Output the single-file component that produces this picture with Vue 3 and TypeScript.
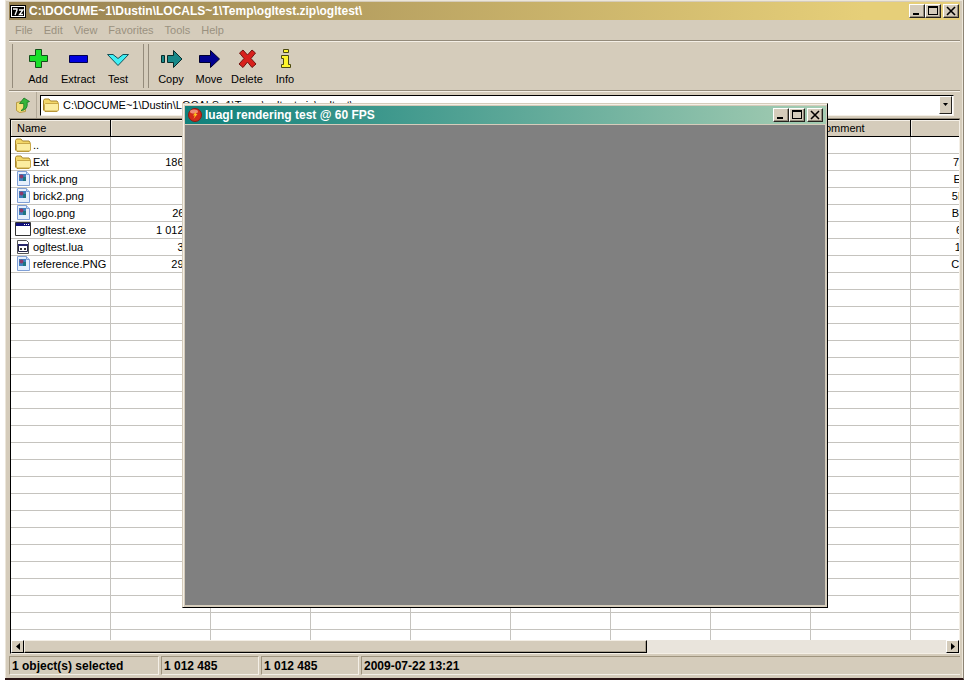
<script setup lang="ts">
import { ref } from 'vue'

interface Entry {
  name: string
  kind: 'folder' | 'image' | 'exe' | 'lua'
  size: string
  crc: string
}

const path = ref('C:\\DOCUME~1\\Dustin\\LOCALS~1\\Temp\\ogltest.zip\\ogltest\\')
const menus: string[] = ['File', 'Edit', 'View', 'Favorites', 'Tools', 'Help']
const archiveTools: string[] = ['Add', 'Extract', 'Test']
const fileTools: string[] = ['Copy', 'Move', 'Delete', 'Info']
const columns: string[] = ['Name', '', '', '', '', '', '', '', 'Comment', '']
const entries: Entry[] = [
  { name: '..', kind: 'folder', size: '', crc: '' },
  { name: 'Ext', kind: 'folder', size: '186 880', crc: '7A40C512' },
  { name: 'brick.png', kind: 'image', size: '860', crc: 'E13B7052' },
  { name: 'brick2.png', kind: 'image', size: '912', crc: '5BA0D421' },
  { name: 'logo.png', kind: 'image', size: '26 112', crc: 'B04D1A37' },
  { name: 'ogltest.exe', kind: 'exe', size: '1 012 485', crc: '60412957' },
  { name: 'ogltest.lua', kind: 'lua', size: '3 402', crc: '1904E273' },
  { name: 'reference.PNG', kind: 'image', size: '29 184', crc: 'C13D05B8' },
]
const fillerRows = 60
const status: string[] = ['1 object(s) selected', '1 012 485', '1 012 485', '2009-07-22 13:21']
const captions: string[] = ['Minimize', 'Maximize', 'Close']
</script>

<template>
  <div class="desktop">
    <main class="window">
      <header class="titlebar">
        <svg class="app-icon" viewBox="0 0 16 13" aria-hidden="true">
          <rect x="0.5" y="0.5" width="15" height="12" fill="#000" stroke="#000" />
          <rect x="1.5" y="1.5" width="13" height="10" fill="none" stroke="#fff" />
          <path d="M3 4h4v1l-2 5M9 5h4l-3.500 4.500H13" fill="none" stroke="#fff" stroke-width="1.300" />
        </svg>
        <h1 class="title">{{ path }}</h1>
        <div class="captions">
          <button v-for="c in captions" :key="c" class="caption" :class="c.toLowerCase()" type="button" :aria-label="c">
            <svg viewBox="0 0 14 12" aria-hidden="true">
              <path v-if="c === 'Minimize'" d="M3 8h6v2H3z" />
              <path v-else-if="c === 'Maximize'" d="M2 1h10v9H2zM3 3v6h8V3z" fill-rule="evenodd" />
              <path v-else d="M3 2l8 8M11 2l-8 8" fill="none" stroke="#000" stroke-width="1.600" />
            </svg>
          </button>
        </div>
      </header>

      <nav class="menubar">
        <button v-for="m in menus" :key="m" class="menu" type="button">{{ m }}</button>
      </nav>

      <div class="toolbar">
        <div class="group">
          <button v-for="t in archiveTools" :key="t" class="tool" type="button">
            <svg viewBox="0 0 24 24" aria-hidden="true">
              <path v-if="t === 'Add'" d="M9.500 2.500h6v6h6v6h-6v6h-6v-6h-6v-6h6z" fill="#19e02a" stroke="#12501a" />
              <path v-else-if="t === 'Extract'" d="M3.500 8.500h18v7h-18z" fill="#0000e0" stroke="#000050" />
              <path v-else d="M1.500 7.500h5.500l5 4 5-4h5.500L12 18.500z" fill="#3ff0f5" stroke="#145058" />
            </svg>
            <span>{{ t }}</span>
          </button>
        </div>
        <div class="group files">
          <button v-for="t in fileTools" :key="t" class="tool" type="button">
            <svg viewBox="0 0 24 24" aria-hidden="true">
              <g v-if="t === 'Copy'" fill="#178888" stroke="#062c2c">
                <path d="M2.500 8.500h3v7h-3z" />
                <path d="M8.500 8.500h6v-5l8.500 8.500-8.500 8.500v-5h-6z" />
              </g>
              <path v-else-if="t === 'Move'" d="M2.500 8.500h11v-5l9 8.500-9 8.500v-5h-11z" fill="#000090" stroke="#000030" />
              <path v-else-if="t === 'Delete'" d="M4.500 6l3.500-3 4.500 5 4.500-5 3.500 3-4.500 5.500 5 5.500-4 3.500-4.500-5.500-4.500 5.500-4-3.500 5-5.500z" fill="#d8201c" stroke="#701410" />
              <g v-else fill="#fff52a" stroke="#4a4810">
                <path d="M10.500 2.500h5v3h-5z" />
                <path d="M8.500 8.500h7v9h2v3h-9v-3h2v-6h-2z" />
              </g>
            </svg>
            <span>{{ t }}</span>
          </button>
        </div>
      </div>

      <div class="addressbar">
        <button class="up" type="button" aria-label="Up one level">
          <svg viewBox="0 0 16 16" aria-hidden="true">
            <path d="M1.500 5.500l5-1 4 2v8l-6 1-3-2z" fill="#f4df7a" stroke="#b69a45" />
            <path d="M6 13.500c3-1.500 3-4 2.500-7H4.500L9 1l5.500 3.500-2.500 1c1 4-1 8-6 8z" fill="#35b53a" stroke="#157321" stroke-width=".8" />
          </svg>
        </button>
        <div class="combo">
          <svg class="folder" viewBox="0 0 16 14" aria-hidden="true">
            <path d="M.5 12V2.500l1-1.500h4.500l1.500 2H14l1 1.500V12l-1 1.500H2z" fill="#f3d768" stroke="#a8862b" />
            <path d="M1.500 12V6.500l1-1H15.500V12l-1 1H2.500z" fill="#fceda0" stroke="#c9a848" />
          </svg>
          <input v-model="path" class="path" type="text" aria-label="Address" spellcheck="false" />
          <button class="drop" type="button" aria-label="Show locations">
            <svg viewBox="0 0 7 4" aria-hidden="true"><path d="M1 0h5L3.500 3z" /></svg>
          </button>
        </div>
      </div>

      <section class="list">
        <div class="viewport">
          <table>
            <thead>
              <tr>
                <th v-for="(c, i) in columns" :key="i" scope="col">{{ c }}</th>
              </tr>
            </thead>
            <tbody>
              <tr v-for="e in entries" :key="e.name">
                <td class="name">
                  <div class="file">
                    <svg viewBox="0 0 16 16" aria-hidden="true">
                      <g v-if="e.kind === 'folder'">
                        <path d="M.5 13V3.500l1-1.500h4.500l1.500 2H14l1 1.500V13l-1 1.500H2z" fill="#f3d768" stroke="#a8862b" />
                        <path d="M1.500 13V7.500l1-1H15.500V13l-1 1H2.500z" fill="#fceda0" stroke="#c9a848" />
                      </g>
                      <g v-else-if="e.kind === 'image'">
                        <path d="M2.500.5h9l3 3v11h-12z" fill="#e6effc" stroke="#7f9fd6" />
                        <path d="M11.500.5v3h3" fill="#c9dcf8" stroke="#7f9fd6" />
                        <path d="M4 3h7v7H4z" fill="#3f7fbe" />
                        <circle cx="6.500" cy="5.500" r="2" fill="#8c3a6a" />
                        <path d="M8 6h3v4H8z" fill="#1f7480" />
                      </g>
                      <g v-else-if="e.kind === 'exe'">
                        <path d="M.5.500h15v13H.5z" fill="#fff" stroke="#333" />
                        <path d="M1 1h14v3H1z" fill="#10107c" />
                        <path d="M9 2h1v1H9zM11 2h1v1h-1zM13 2h1v1h-1z" fill="#fff" />
                      </g>
                      <g v-else>
                        <path d="M2.500 1.500h9l2 2v11h-11z" fill="#fff" stroke="#555" />
                        <path d="M3.500 5.500h9v7h-9z" fill="#fff" stroke="#26264a" />
                        <path d="M3 5h10v2H3z" fill="#26266a" />
                        <path d="M5 9h2v2H5zM9 9h2v2H9z" fill="#333" />
                      </g>
                    </svg>
                    <span>{{ e.name }}</span>
                  </div>
                </td>
                <td class="num">{{ e.size }}</td>
                <td v-for="n in 7" :key="n"></td>
                <td class="num">{{ e.crc }}</td>
              </tr>
              <tr v-for="r in fillerRows" :key="r" aria-hidden="true">
                <td v-for="(c, i) in columns" :key="i"></td>
              </tr>
            </tbody>
          </table>
        </div>
        <div class="scrollbar">
          <button class="arrow" type="button" aria-label="Scroll left">
            <svg viewBox="0 0 4 7" aria-hidden="true"><path d="M4 0v7L0 3.500z" /></svg>
          </button>
          <div class="track"><div class="thumb"></div></div>
          <button class="arrow" type="button" aria-label="Scroll right">
            <svg viewBox="0 0 4 7" aria-hidden="true"><path d="M0 0v7l4-3.500z" /></svg>
          </button>
        </div>
      </section>

      <footer class="statusbar">
        <div v-for="(s, i) in status" :key="i" class="pane">{{ s }}</div>
      </footer>
    </main>

    <section class="render" role="dialog" aria-labelledby="render-title">
      <header class="titlebar teal">
        <svg class="orb" viewBox="0 0 14 14" aria-hidden="true">
          <circle cx="7" cy="7" r="6.500" fill="#d22a1c" stroke="#8d1a10" />
          <ellipse cx="6" cy="3.500" rx="4" ry="2" fill="#ee8b78" />
          <path d="M8.500 3L5 7.500h1.800L5.500 11l4-5H7.700z" fill="#ffc21c" />
        </svg>
        <h2 id="render-title" class="title">luagl rendering test @ 60 FPS</h2>
        <div class="captions">
          <button v-for="c in captions" :key="c" class="caption" :class="c.toLowerCase()" type="button" :aria-label="c">
            <svg viewBox="0 0 14 12" aria-hidden="true">
              <path v-if="c === 'Minimize'" d="M3 8h6v2H3z" />
              <path v-else-if="c === 'Maximize'" d="M2 1h10v9H2zM3 3v6h8V3z" fill-rule="evenodd" />
              <path v-else d="M3 2l8 8M11 2l-8 8" fill="none" stroke="#000" stroke-width="1.600" />
            </svg>
          </button>
        </div>
      </header>
      <div class="canvas"></div>
    </section>
  </div>
</template>

<style>
body {
  margin: 0;
}
</style>

<style scoped>
.desktop {
  position: relative;
  box-sizing: border-box;
  height: 100vh;
  padding: 0 2px 0 5px;
  overflow: hidden;
  background: #fff;
  color: #000;
  font: 11px/16px "Liberation Sans", Arial, sans-serif;
}
.desktop *,
.desktop *::before {
  box-sizing: border-box;
}
button {
  margin: 0;
  padding: 0;
  border: 0;
  border-radius: 0;
  background: none;
  color: inherit;
  font: inherit;
}
svg {
  display: block;
  flex: none;
}
.window {
  display: flex;
  flex-direction: column;
  height: 100%;
  padding: 1px 3px 3px 4px;
  border-right: 1px solid #8d8474;
  border-bottom: 2px solid #2a1414;
  background: #d5ccbb;
  box-shadow: inset 1px 1px #ece6da, inset -1px 0 #ece6da;
}
.titlebar {
  display: flex;
  flex: none;
  align-items: center;
  gap: 3px;
  height: 18px;
  margin-top: 1px;
  padding: 0 1px 0 1px;
  background: linear-gradient(90deg, #978151, #e6cf79 90%);
}
.app-icon {
  width: 16px;
  height: 13px;
}
.title {
  flex: 1;
  min-width: 0;
  margin: 0;
  overflow: hidden;
  color: #fff;
  font-size: 12px;
  font-weight: bold;
  line-height: 16px;
  white-space: nowrap;
}
.captions {
  display: flex;
}
.caption {
  width: 16px;
  height: 14px;
  border: 1px solid;
  border-color: #fff #262420 #262420 #fff;
  background: #d5ccbb;
  box-shadow: inset -1px -1px #948b7b;
}
.caption svg {
  width: 14px;
  height: 12px;
}
.caption.close {
  margin-left: 2px;
}
.menubar {
  display: flex;
  flex: none;
  gap: 11px;
  height: 21px;
  padding: 0 6px;
  border-bottom: 1px solid #948b7b;
}
.menu {
  height: 20px;
  color: #9a917f;
}
.toolbar {
  display: flex;
  flex: none;
  height: 50px;
  border-top: 1px solid #f4efe6;
  border-bottom: 1px solid #948b7b;
}
.group {
  display: flex;
  margin: 2px 0 2px 3px;
  padding-left: 5px;
  border-left: 1px solid #948b7b;
}
.group.files {
  margin-left: 10px;
  padding-left: 3px;
  box-shadow: -4px 0 #d5ccbb, -5px 0 #948b7b;
}
.tool {
  display: flex;
  flex-direction: column;
  align-items: center;
  width: 40px;
  padding-top: 3px;
}
.files .tool {
  width: 38px;
}
.tool svg {
  width: 24px;
  height: 24px;
}
.addressbar {
  display: flex;
  flex: none;
  align-items: center;
  height: 28px;
  padding-right: 6px;
  border-top: 1px solid #f4efe6;
  border-bottom: 1px solid #948b7b;
}
.up {
  display: flex;
  align-items: center;
  justify-content: center;
  width: 28px;
  height: 26px;
  margin-right: 3px;
  border-right: 1px solid #b3aa99;
}
.up svg {
  width: 16px;
  height: 16px;
}
.combo {
  display: flex;
  flex: 1;
  align-items: center;
  height: 21px;
  padding: 0 1px 0 2px;
  border: 1px solid;
  border-color: #000 #f4efe6 #f4efe6 #000;
  background: #fff;
}
.folder {
  width: 16px;
  height: 14px;
}
.path {
  flex: 1;
  min-width: 0;
  height: 18px;
  margin: 0;
  padding: 0 4px;
  border: 0;
  outline: 0;
  background: none;
  color: #000;
  font: inherit;
}
.drop {
  display: flex;
  align-items: center;
  justify-content: center;
  width: 13px;
  height: 18px;
  border: 1px solid;
  border-color: #fff #262420 #262420 #fff;
  background: #d5ccbb;
}
.drop svg {
  width: 7px;
  height: 4px;
}
.list {
  display: flex;
  flex: 1 1 0;
  flex-direction: column;
  min-height: 0;
  margin-left: 1px;
  border: 1px solid;
  border-color: #000 #f4efe6 #f4efe6 #000;
  background: #fff;
}
.viewport {
  flex: 1 1 0;
  min-height: 0;
  overflow: hidden;
}
table {
  width: 1000px;
  border-collapse: separate;
  border-spacing: 0;
  table-layout: fixed;
}
th {
  height: 17px;
  padding: 0 6px;
  border-right: 1px solid #000;
  border-bottom: 1px solid #000;
  background: #d5ccbb;
  box-shadow: inset 1px 1px #f4efe6;
  font-weight: normal;
  line-height: 16px;
  text-align: left;
}
td {
  height: 17px;
  padding: 0;
  border-right: 1px solid #c5c3be;
  border-bottom: 1px solid #c5c3be;
  line-height: 16px;
  white-space: nowrap;
}
td.num {
  padding-right: 5px;
  text-align: right;
}
.file {
  display: flex;
  gap: 2px;
  height: 16px;
  padding-left: 4px;
}
.file svg {
  width: 16px;
  height: 16px;
}
.scrollbar {
  display: flex;
  flex: none;
  height: 13px;
  background: #e9e4dc;
}
.arrow {
  display: flex;
  align-items: center;
  justify-content: center;
  width: 13px;
  border: 1px solid;
  border-color: #fff #000 #000 #fff;
  background: #d5ccbb;
}
.arrow svg {
  width: 4px;
  height: 7px;
}
.track {
  flex: 1;
}
.thumb {
  width: 67.6%;
  height: 100%;
  border: 1px solid;
  border-color: #f4efe6 #000 #000 #f4efe6;
  background: #d5ccbb;
  box-shadow: inset -1px -1px #a79e8d;
}
.statusbar {
  display: flex;
  flex: none;
  gap: 2px;
  height: 21px;
  padding-top: 2px;
  font-size: 12px;
  font-weight: bold;
}
.pane {
  width: 98px;
  padding: 0 2px;
  border: 1px solid;
  border-color: #a0957f #f4efe6 #f4efe6 #a0957f;
  line-height: 18px;
  white-space: nowrap;
}
.pane:first-child {
  width: 150px;
}
.pane:last-child {
  flex: 1;
  border-right: 0;
}
.render {
  position: absolute;
  top: 103px;
  left: 182px;
  display: flex;
  flex-direction: column;
  width: 646px;
  height: 505px;
  padding: 2px 1px 1px;
  border: 1px solid;
  border-color: #d5ccbb #000 #000 #d5ccbb;
  background: #d5ccbb;
  box-shadow: inset 1px 1px #f4efe6;
}
.titlebar.teal {
  margin: 0 0 0 1px;
  padding: 0 3px;
  background: linear-gradient(90deg, #0f807b, #a6cdb3);
}
.orb {
  width: 14px;
  height: 14px;
}
.canvas {
  flex: 1;
  margin: 1px;
  background: #808080;
}
</style>
